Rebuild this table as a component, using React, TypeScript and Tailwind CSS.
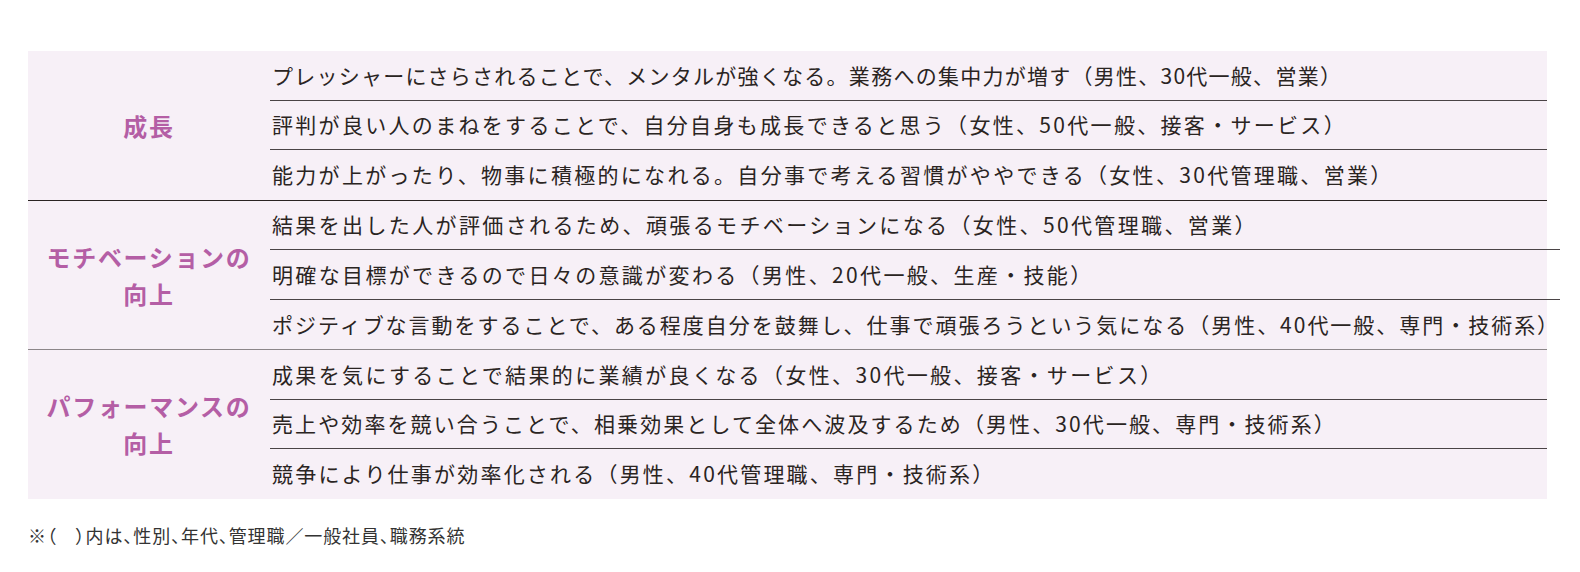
const groups = [
  {
    label: ["成長"],
    rows: [
      { t: "プレッシャーにさらされることで、メンタルが強くなる。業務への集中力が増す（男性、30代一般、営業）", c: "tracking-[0.06em]" },
      { t: "評判が良い人のまねをすることで、自分自身も成長できると思う（女性、50代一般、接客・サービス）", c: "tracking-[0.11em]" },
      { t: "能力が上がったり、物事に積極的になれる。自分事で考える習慣がややできる（女性、30代管理職、営業）", c: "tracking-[0.11em]" },
    ],
  },
  {
    label: ["モチベーションの", "向上"],
    rows: [
      { t: "結果を出した人が評価されるため、頑張るモチベーションになる（女性、50代管理職、営業）", c: "tracking-[0.113em]" },
      { t: "明確な目標ができるので日々の意識が変わる（男性、20代一般、生産・技能）", c: "tracking-[0.112em]" },
      { t: "ポジティブな言動をすることで、ある程度自分を鼓舞し、仕事で頑張ろうという気になる（男性、40代一般、専門・技術系）", c: "tracking-[0.094em]" },
    ],
  },
  {
    label: ["パフォーマンスの", "向上"],
    rows: [
      { t: "成果を気にすることで結果的に業績が良くなる（女性、30代一般、接客・サービス）", c: "tracking-[0.112em]" },
      { t: "売上や効率を競い合うことで、相乗効果として全体へ波及するため（男性、30代一般、専門・技術系）", c: "tracking-[0.1em]" },
      { t: "競争により仕事が効率化される（男性、40代管理職、専門・技術系）", c: "tracking-[0.105em]" },
    ],
  },
];

export default function App() {
  return (
    <div className="w-[1580px] h-[572px] bg-white pt-[51px] px-[28px] font-['Noto_Sans_CJK_JP',sans-serif] text-[#2a2422]">
      <div className="w-[1519px] bg-[#f7f0f7]">
        {groups.map((g, gi) => (
          <div
            key={gi}
            className={
              "flex " +
              (gi === 0 ? "border-b border-[#2a2422]" : gi === 1 ? "border-b border-[#8c8689]" : "")
            }
          >
            <div className="w-[242px] shrink-0 flex flex-col items-center justify-center text-[24px] leading-[37px] font-bold tracking-[0.07em] text-[#b45ea5]">
              {g.label.map((l) => (
                <span key={l}>{l}</span>
              ))}
            </div>
            <div className="flex-1">
              {g.rows.map((r, ri) => (
                <div
                  key={ri}
                  className={
                    "h-[49.5px] flex items-center pl-[2px] text-[21px] whitespace-nowrap " +
                    r.c +
                    (ri < 2 ? " border-b border-[#4a4446]" : "")
                  }
                >
                  {r.t}
                </div>
              ))}
            </div>
          </div>
        ))}
      </div>
      <div className="mt-[23px] text-[18px] tracking-[0.05em] text-[#333] [font-feature-settings:'palt']">
        ※（　）内は、性別、年代、管理職／一般社員、職務系統
      </div>
    </div>
  );
}
